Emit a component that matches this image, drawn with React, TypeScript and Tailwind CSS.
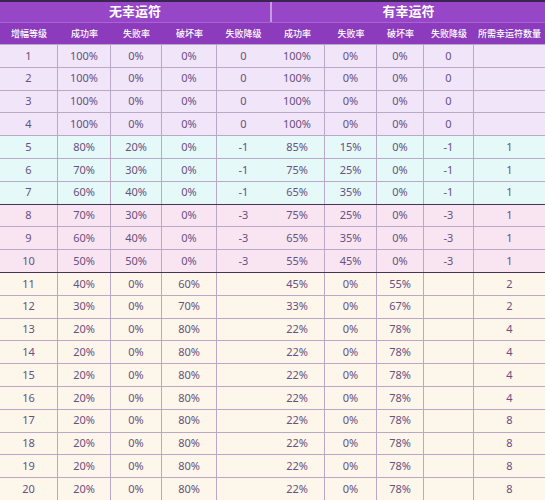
type Row = {
  lv: number;
  a: string[];
  b: string[];
  group: "lav" | "cyan" | "pink" | "cream";
};

const rows: Row[] = [
  { lv: 1, a: ["100%", "0%", "0%", "0"], b: ["100%", "0%", "0%", "0", ""], group: "lav" },
  { lv: 2, a: ["100%", "0%", "0%", "0"], b: ["100%", "0%", "0%", "0", ""], group: "lav" },
  { lv: 3, a: ["100%", "0%", "0%", "0"], b: ["100%", "0%", "0%", "0", ""], group: "lav" },
  { lv: 4, a: ["100%", "0%", "0%", "0"], b: ["100%", "0%", "0%", "0", ""], group: "lav" },
  { lv: 5, a: ["80%", "20%", "0%", "-1"], b: ["85%", "15%", "0%", "-1", "1"], group: "cyan" },
  { lv: 6, a: ["70%", "30%", "0%", "-1"], b: ["75%", "25%", "0%", "-1", "1"], group: "cyan" },
  { lv: 7, a: ["60%", "40%", "0%", "-1"], b: ["65%", "35%", "0%", "-1", "1"], group: "cyan" },
  { lv: 8, a: ["70%", "30%", "0%", "-3"], b: ["75%", "25%", "0%", "-3", "1"], group: "pink" },
  { lv: 9, a: ["60%", "40%", "0%", "-3"], b: ["65%", "35%", "0%", "-3", "1"], group: "pink" },
  { lv: 10, a: ["50%", "50%", "0%", "-3"], b: ["55%", "45%", "0%", "-3", "1"], group: "pink" },
  { lv: 11, a: ["40%", "0%", "60%", ""], b: ["45%", "0%", "55%", "", "2"], group: "cream" },
  { lv: 12, a: ["30%", "0%", "70%", ""], b: ["33%", "0%", "67%", "", "2"], group: "cream" },
  { lv: 13, a: ["20%", "0%", "80%", ""], b: ["22%", "0%", "78%", "", "4"], group: "cream" },
  { lv: 14, a: ["20%", "0%", "80%", ""], b: ["22%", "0%", "78%", "", "4"], group: "cream" },
  { lv: 15, a: ["20%", "0%", "80%", ""], b: ["22%", "0%", "78%", "", "4"], group: "cream" },
  { lv: 16, a: ["20%", "0%", "80%", ""], b: ["22%", "0%", "78%", "", "4"], group: "cream" },
  { lv: 17, a: ["20%", "0%", "80%", ""], b: ["22%", "0%", "78%", "", "8"], group: "cream" },
  { lv: 18, a: ["20%", "0%", "80%", ""], b: ["22%", "0%", "78%", "", "8"], group: "cream" },
  { lv: 19, a: ["20%", "0%", "80%", ""], b: ["22%", "0%", "78%", "", "8"], group: "cream" },
  { lv: 20, a: ["20%", "0%", "80%", ""], b: ["22%", "0%", "78%", "", "8"], group: "cream" },
];

const bg = {
  lav: "bg-[#f1e5f9]",
  cyan: "bg-[#e5f9f8]",
  pink: "bg-[#f9e5f2]",
  cream: "bg-[#fdf6ea]",
};

const widthsA = ["w-[58px]", "w-[53px]", "w-[51px]", "w-[55px]", "w-[53px]"];
const widthsB = ["w-[55px]", "w-[52px]", "w-[47px]", "w-[50px]", "w-[71px]"];

const headA = ["增幅等级", "成功率", "失败率", "破坏率", "失败降级"];
const headB = ["成功率", "失败率", "破坏率", "失败降级", "所需幸运符数量"];

export default function App() {
  return (
    <div
      className="w-[545px] h-[500px] overflow-hidden bg-[#fdf6ea] text-[#685080]"
      style={{ fontFamily: '"Noto Sans", "Noto Sans CJK SC", sans-serif' }}
    >
      {/* 标题行 */}
      <div className="flex h-[22px] bg-[#9646c6] border-t-2 border-[#3a2450] text-white font-bold text-[13px]">
        <div className="w-[270px] flex items-center justify-center">无幸运符</div>
        <div className="w-[2px] bg-[#c79be0]" />
        <div className="flex-1 flex items-center justify-center">有幸运符</div>
      </div>

      {/* 表头 */}
      <div className="flex h-[22px] bg-[#8b3bbb] border-t border-[#a865d2] text-white text-[9px] font-medium">
        <div className="flex">
          {headA.map((h, i) => (
            <div key={i} className={`${widthsA[i]} flex items-center justify-center`}>
              {h}
            </div>
          ))}
        </div>
        <div className="w-[2px] bg-[#6b2d95]" />
        <div className="flex">
          {headB.map((h, i) => (
            <div key={i} className={`${widthsB[i]} flex items-center justify-center whitespace-nowrap`}>
              {h}
            </div>
          ))}
        </div>
      </div>

      {/* 数据 */}
      {rows.map((r, idx) => {
        const thick = idx === 7 || idx === 10;
        return (
          <div
            key={r.lv}
            className={`flex h-[22.8px] text-[11px] border-t ${
              thick ? "border-[#44345a]" : "border-[#b9a9c6]"
            } ${bg[r.group]}`}
          >
            <div className="flex">
              {[String(r.lv), ...r.a].map((c, i) => (
                <div
                  key={i}
                  className={`${widthsA[i]} flex items-center justify-center border-r border-[#b9a9c6] last:border-r-0`}
                >
                  {c}
                </div>
              ))}
            </div>
            <div className="w-[2px] bg-[#4e3568]" />
            <div className="flex">
              {r.b.map((c, i) => (
                <div
                  key={i}
                  className={`${widthsB[i]} flex items-center justify-center border-r border-[#b9a9c6] last:border-r-0`}
                >
                  {c}
                </div>
              ))}
            </div>
          </div>
        );
      })}
    </div>
  );
}
